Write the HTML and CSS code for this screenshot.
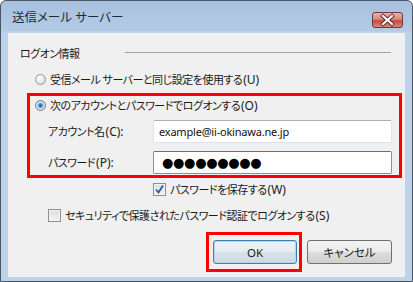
FILE: index.html
```html
<!DOCTYPE html>
<html lang="ja">
<head>
  <meta charset="UTF-8">
  <meta name="viewport" content="width=device-width, initial-scale=1.0">
  <title>送信メール サーバー</title>
  <link rel="stylesheet" href="styles.css">
</head>
<body>

  <!-- Dialog window -->
  <div class="window">

    <!-- Title bar -->
    <div class="titlebar">
      <span class="title">送信メール サーバー</span>
      <span class="close">
        <svg width="31" height="16" viewBox="0 0 31 16">
          <path d="M11 4 L20 12 M20 4 L11 12" stroke="#5a2a2a" stroke-width="4" stroke-linecap="square"/>
          <path d="M11 4 L20 12 M20 4 L11 12" stroke="#ffffff" stroke-width="2.2" stroke-linecap="square"/>
        </svg>
      </span>
    </div>

    <!-- Content -->
    <div class="panel">

      <div class="group-head">
        <span class="group-label">ログオン情報</span>
        <span class="group-line"></span>
      </div>

      <div class="row radio-row">
        <span class="radio"></span>
        <span>受信メール&nbsp;サーバーと同じ設定を使用する<span class="key">(U)</span></span>
      </div>

      <div class="highlight">
        <div class="row radio-row inner">
          <span class="radio checked"></span>
          <span>次のアカウントとパスワードでログオンする<span class="key">(O)</span></span>
        </div>

        <div class="field-row first">
          <span class="field-label">アカウント名<span class="key">(C):</span></span>
          <span class="textbox">example@ii-okinawa.ne.jp</span>
        </div>

        <div class="field-row second">
          <span class="field-label">パスワード<span class="key">(P):</span></span>
          <span class="textbox focused"><span class="dots">●●●●●●●●●</span></span>
        </div>
      </div>

      <div class="row check-row save">
        <span class="checkbox checked">
          <svg width="11" height="11" viewBox="0 0 11 11">
            <path d="M2 5.5 L4.5 8.5 L9 1.5" fill="none" stroke="#2b5d9c" stroke-width="1.8"/>
          </svg>
        </span>
        <span>パスワードを保存する<span class="key">(W)</span></span>
      </div>

      <div class="row check-row secure">
        <span class="checkbox"></span>
        <span>セキュリティで保護されたパスワード認証でログオンする<span class="key">(S)</span></span>
      </div>

      <div class="buttons">
        <div class="btn-highlight">
          <span class="button default">OK</span>
        </div>
        <span class="button cancel">キャンセル</span>
      </div>

    </div>
  </div>

</body>
</html>
```

FILE: styles.css
```css
body {
  margin: 0;
  font-family: "Noto Sans", "Noto Sans CJK JP", sans-serif;
  font-size: 11px;
  letter-spacing: -0.5px;
  color: #1a1a1a;
  font-feature-settings: "palt";
}

.key {
  font-size: 12px;
  letter-spacing: 0;
  margin-left: 1px;
}

.window {
  width: 413px;
  height: 282px;
  box-sizing: border-box;
  border: 1px solid #4a5663;
  border-radius: 6px 6px 0 0;
  background: linear-gradient(#a6c1de 0, #b4cbe6 30px, #bcd3ea 31px);
  display: flex;
  flex-direction: column;
}

.titlebar {
  height: 30px;
  display: flex;
  align-items: center;
  padding: 0 9px 2px 11px;
  justify-content: space-between;
}

.title {
  font-size: 12.5px;
  letter-spacing: 0;
  color: #1e2a38;
}

.close {
  width: 31px;
  height: 16px;
  margin-top: 7px;
  box-sizing: border-box;
  border: 1px solid #6e3a3a;
  border-radius: 3px;
  background: linear-gradient(#e9b0a8 0, #d9877c 45%, #c84b40 55%, #d8887b 100%);
  display: flex;
  align-items: center;
  justify-content: center;
}

.close svg {
  margin: -1px;
}

.panel {
  margin: 0 7px;
  height: 244px;
  background: #f0f0f0;
  padding-top: 12px;
  box-sizing: border-box;
}

.group-head {
  display: flex;
  align-items: center;
  height: 16px;
  padding-left: 12px;
}

.group-line {
  flex: 1;
  height: 1px;
  background: #a0a0a0;
  margin: -2px 14px 0 45px;
}

.row {
  display: flex;
  align-items: center;
  height: 16px;
}

.radio-row {
  margin-top: 10px;
  padding-left: 27px;
}

.radio {
  width: 11px;
  height: 11px;
  border-radius: 50%;
  border: 1px solid #9a9a9a;
  background: radial-gradient(circle at 40% 35%, #ffffff 0, #e6e6e6 55%, #c8c8c8 100%);
  margin-right: 4px;
  box-sizing: border-box;
  flex-shrink: 0;
}

.radio.checked {
  background: radial-gradient(circle, #1b5a9e 0, #3d8fd0 25%, #9cc2e4 40%, #e8eef4 70%, #d0d0d0 100%);
  border-color: #6e7a86;
}

.highlight {
  margin: 6px 3px 0 19px;
  border: 3px solid #ff0000;
  padding: 1px 7px 1px 5px;
}

.highlight .inner {
  margin-top: 0;
  padding-left: 0;
}

.field-row {
  display: flex;
  align-items: center;
  height: 23px;
}

.field-row.first {
  margin-top: 7px;
}

.field-row.second {
  margin-top: 8px;
}

.field-label {
  width: 118px;
  padding-left: 13px;
  box-sizing: border-box;
}

.textbox {
  flex: 1;
  height: 23px;
  box-sizing: border-box;
  background: #fff;
  border: 1px solid #e2e3ea;
  border-top-color: #abadb3;
  border-radius: 2px;
  padding-left: 5px;
  display: flex;
  align-items: center;
  font-size: 11px;
  letter-spacing: -0.2px;
  color: #111;
}

.textbox.focused {
  border-color: #569de5;
  border-top-color: #3d7bad;
}

.dots {
  font-family: "DejaVu Sans", sans-serif;
  font-size: 13px;
  letter-spacing: -0.3px;
  padding-left: 3px;
  color: #000;
}

.check-row {
  margin-top: 3px;
}

.check-row.save {
  padding-left: 145px;
}

.check-row.secure {
  margin-top: 10px;
  padding-left: 40px;
}

.checkbox {
  width: 13px;
  height: 13px;
  box-sizing: border-box;
  border: 1px solid #8e8f8f;
  background: linear-gradient(#dcdcdc, #f4f4f4);
  box-shadow: inset 0 0 0 1px #f4f4f4;
  margin-right: 4px;
  display: flex;
  align-items: center;
  justify-content: center;
  flex-shrink: 0;
}

.buttons {
  display: flex;
  justify-content: flex-end;
  align-items: center;
  margin-top: 9px;
  padding-right: 13px;
}

.btn-highlight {
  border: 3px solid #ff0000;
  padding: 5px 2px 5px 4px;
  margin-right: 5px;
}

.button {
  height: 24px;
  box-sizing: border-box;
  border: 1px solid #707070;
  border-radius: 3px;
  background: linear-gradient(#f2f2f2 0, #ebebeb 50%, #dddddd 51%, #cfcfcf 100%);
  display: flex;
  align-items: center;
  justify-content: center;
  font-size: 11.5px;
  letter-spacing: 0;
}

.button.default {
  width: 84px;
  border-color: #3c7fb1;
  background: linear-gradient(#eef4f8 0, #e4ecf2 50%, #d8e2ea 51%, #cdd9e3 100%);
  box-shadow: inset 0 0 0 1px #b6d4ea;
}

.button.cancel {
  width: 85px;
}
```
